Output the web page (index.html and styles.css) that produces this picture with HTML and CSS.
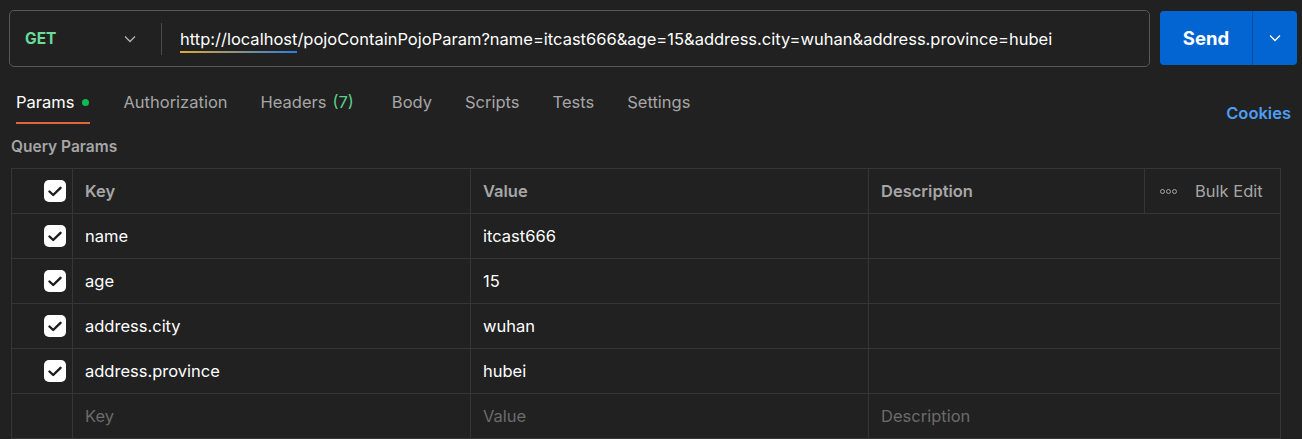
FILE: index.html
```html
<!DOCTYPE html>
<html>
<head>
<meta charset="utf-8">
<link rel="stylesheet" href="styles.css">
</head>
<body>
<div class="topbar">
  <div class="urlbox">
    <div class="method">
      <span class="method-name">GET</span>
      <svg class="chev" width="12" height="8" viewBox="0 0 12 8"><path d="M1 1.5 L6 6.5 L11 1.5" fill="none" stroke="#b3b3b3" stroke-width="1.3"/></svg>
    </div>
    <div class="vsep"></div>
    <div class="url"><span class="host">http://localhost</span>/pojoContainPojoParam?name=itcast666&amp;age=15&amp;address.city=wuhan&amp;address.province=hubei</div>
  </div>
  <div class="send">
    <span class="send-label">Send</span>
    <span class="send-menu"><svg width="12" height="8" viewBox="0 0 12 8"><path d="M1 1.5 L6 6.5 L11 1.5" fill="none" stroke="#ffffff" stroke-width="1.3"/></svg></span>
  </div>
</div>

<div class="tabsrow">
  <div class="tabs">
    <div class="tab active">Params <span class="dot"></span></div>
    <div class="tab">Authorization</div>
    <div class="tab tab-headers">Headers <span class="green">(7)</span></div>
    <div class="tab">Body</div>
    <div class="tab">Scripts</div>
    <div class="tab">Tests</div>
    <div class="tab">Settings</div>
  </div>
  <div class="cookies">Cookies</div>
</div>

<div class="section-title">Query Params</div>

<div class="table">
  <div class="cell chk"><span class="box"><svg width="14" height="11" viewBox="0 0 14 11"><path d="M1.5 5.5 L5.2 9 L12.5 1.8" fill="none" stroke="#1c1c1c" stroke-width="2.4" stroke-linecap="round" stroke-linejoin="round"/></svg></span></div>
  <div class="cell head">Key</div>
  <div class="cell head">Value</div>
  <div class="cell head desc-head"><span class="desc-title">Description</span><span class="bulk"><span class="dots"><i></i><i></i><i></i></span>Bulk Edit</span></div>

  <div class="cell chk"><span class="box"><svg width="14" height="11" viewBox="0 0 14 11"><path d="M1.5 5.5 L5.2 9 L12.5 1.8" fill="none" stroke="#1c1c1c" stroke-width="2.4" stroke-linecap="round" stroke-linejoin="round"/></svg></span></div>
  <div class="cell val">name</div>
  <div class="cell val">itcast666</div>
  <div class="cell val"></div>

  <div class="cell chk"><span class="box"><svg width="14" height="11" viewBox="0 0 14 11"><path d="M1.5 5.5 L5.2 9 L12.5 1.8" fill="none" stroke="#1c1c1c" stroke-width="2.4" stroke-linecap="round" stroke-linejoin="round"/></svg></span></div>
  <div class="cell val">age</div>
  <div class="cell val">15</div>
  <div class="cell val"></div>

  <div class="cell chk"><span class="box"><svg width="14" height="11" viewBox="0 0 14 11"><path d="M1.5 5.5 L5.2 9 L12.5 1.8" fill="none" stroke="#1c1c1c" stroke-width="2.4" stroke-linecap="round" stroke-linejoin="round"/></svg></span></div>
  <div class="cell val">address.city</div>
  <div class="cell val">wuhan</div>
  <div class="cell val"></div>

  <div class="cell chk"><span class="box"><svg width="14" height="11" viewBox="0 0 14 11"><path d="M1.5 5.5 L5.2 9 L12.5 1.8" fill="none" stroke="#1c1c1c" stroke-width="2.4" stroke-linecap="round" stroke-linejoin="round"/></svg></span></div>
  <div class="cell val">address.province</div>
  <div class="cell val">hubei</div>
  <div class="cell val"></div>

  <div class="cell chk"></div>
  <div class="cell ph">Key</div>
  <div class="cell ph">Value</div>
  <div class="cell ph">Description</div>
</div>
</body>
</html>
```
FILE: styles.css
```css
html, body {
  margin: 0;
  padding: 0;
  background: #212121;
  height: 439px;
  overflow: hidden;
}
body {
  font-family: Inter, "Noto Sans", sans-serif;
  color: #ffffff;
  font-size: 16.5px;
}
.topbar {
  display: flex;
  padding: 10px 5px 0 9px;
  height: 56px;
}
.urlbox {
  flex: 1;
  display: flex;
  align-items: center;
  border: 1px solid #585858;
  border-radius: 5px;
  box-sizing: border-box;
  height: 57px;
}
.method {
  display: flex;
  align-items: center;
  justify-content: space-between;
  width: 140px;
  padding-left: 15px;
  padding-right: 14px;
  box-sizing: border-box;
}
.method-name {
  color: #6bdb98;
  font-weight: 700;
  font-size: 15.5px;
}
.vsep {
  width: 1px;
  height: 32px;
  background: #4a4a4a;
  margin-left: 11px;
  margin-right: 18px;
}
.url {
  font-size: 16.5px;
  color: #ffffff;
  white-space: nowrap;
}
.host {
  display: inline-block;
  position: relative;
}
.host::after {
  content: "";
  position: absolute;
  left: 0;
  right: 0;
  bottom: -4px;
  height: 2px;
  background: linear-gradient(90deg, #e0a92a, #2b7fe0);
}
.send {
  margin-left: 10px;
  margin-top: 1px;
  width: 137px;
  height: 54px;
  display: flex;
  background: #0265d2;
  border-radius: 4px;
}
.send-label {
  width: 92px;
  display: flex;
  align-items: center;
  justify-content: center;
  font-weight: 700;
  font-size: 18.5px;
  border-right: 1px solid #0a4d99;
}
.send-menu {
  flex: 1;
  display: flex;
  align-items: center;
  justify-content: center;
}
.tabsrow {
  display: flex;
  justify-content: space-between;
  align-items: flex-start;
  padding: 0 11px 0 16px;
  margin-top: 18px;
}
.tabs {
  display: flex;
  gap: 33px;
}
.tab {
  color: #a6a6a6;
  height: 40px;
  box-sizing: border-box;
  padding-top: 8px;
  display: flex;
  align-items: flex-start;
  gap: 6px;
}
.tab-headers { padding-right: 5px; }
.tab.active {
  color: #ffffff;
  border-bottom: 2px solid #e2643c;
  gap: 8px;
}
.dot {
  width: 7px;
  height: 7px;
  border-radius: 50%;
  background: #0cbb52;
  margin-top: 7px;
  margin-right: 1px;
}
.green { color: #5ccf8b; }
.cookies {
  color: #4c9ef5;
  font-weight: 600;
  margin-top: 19px;
}
.section-title {
  color: #a6a6a6;
  font-weight: 600;
  font-size: 15.5px;
  padding-left: 11px;
  margin-top: 13px;
  height: 31px;
}
.table {
  margin-left: 11px;
  width: 1270px;
  display: grid;
  grid-template-columns: 61px 398px 398px 1fr;
  grid-auto-rows: 45px;
  border-top: 1px solid #353535;
  border-left: 1px solid #353535;
  box-sizing: border-box;
}
.cell {
  border-right: 1px solid #353535;
  border-bottom: 1px solid #353535;
  display: flex;
  align-items: center;
  padding-left: 12px;
}
.chk {
  justify-content: flex-end;
  padding-left: 0;
  padding-right: 6px;
}
.box {
  width: 22px;
  height: 22px;
  background: #ffffff;
  border-radius: 5px;
  display: flex;
  align-items: center;
  justify-content: center;
}
.head {
  color: #a6a6a6;
  font-weight: 600;
}
.desc-head {
  padding-left: 0;
  justify-content: space-between;
}
.desc-title { padding-left: 12px; }
.bulk {
  width: 136px;
  height: 100%;
  border-left: 1px solid #353535;
  display: flex;
  align-items: center;
  font-weight: 400;
  color: #a6a6a6;
  padding-left: 15px;
  box-sizing: border-box;
}
.dots {
  display: flex;
  gap: 1px;
  margin-right: 18px;
}
.dots i {
  width: 3px;
  height: 3px;
  border: 1px solid #a6a6a6;
  border-radius: 50%;
}
.val { color: #ffffff; }
.ph { color: #6b6b6b; }
```
